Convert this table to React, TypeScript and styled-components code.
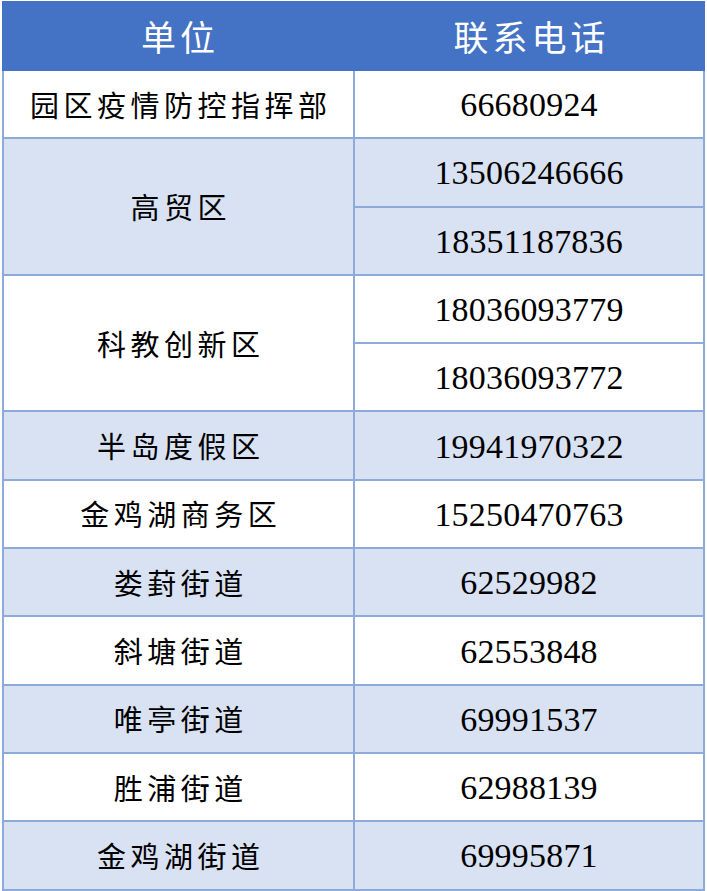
import React from "react";
import styled, { createGlobalStyle } from "styled-components";

const GlobalStyle = createGlobalStyle`
  html, body {
    margin: 0;
    padding: 0;
    background: #ffffff;
  }
  body {
    font-family: "Liberation Serif", "Noto Sans CJK SC", serif;
  }
`;

const Page = styled.div`
  padding: 1px 2px 2px 2px;
  width: 703px;
`;

const Header = styled.div`
  display: grid;
  grid-template-columns: 352px 351px;
  height: 70px;
  background: #4472c4;
`;

const HeadCell = styled.div`
  display: flex;
  align-items: center;
  justify-content: center;
  color: #ffffff;
  font-family: "Noto Sans CJK SC", sans-serif;
  font-size: 35px;
  letter-spacing: 4px;
  padding-left: 4px;
  padding-bottom: 2px;
`;

const Body = styled.div`
  display: grid;
  grid-template-columns: 349px 348px;
  grid-auto-rows: 66.3px;
  gap: 2px;
  padding: 0 2px 2px 2px;
  background: #8eaadb;
`;

const Cell = styled.div<{ $shade: boolean; $span?: number }>`
  display: flex;
  align-items: center;
  justify-content: center;
  background: ${(p) => (p.$shade ? "#d9e2f3" : "#ffffff")};
  grid-row: ${(p) => (p.$span ? `span ${p.$span}` : "auto")};
  color: #000000;
`;

const Unit = styled.span`
  font-family: "Noto Sans CJK SC", sans-serif;
  font-size: 29px;
  letter-spacing: 4.5px;
  padding-left: 4.5px;
  line-height: 1;
`;

const Phone = styled.span`
  font-family: "Liberation Serif", serif;
  font-size: 34px;
  letter-spacing: 0.2px;
  line-height: 1;
  padding-top: 2px;
`;

type Entry = { unit: string; phones: string[] };

const entries: Entry[] = [
  { unit: "园区疫情防控指挥部", phones: ["66680924"] },
  { unit: "高贸区", phones: ["13506246666", "18351187836"] },
  { unit: "科教创新区", phones: ["18036093779", "18036093772"] },
  { unit: "半岛度假区", phones: ["19941970322"] },
  { unit: "金鸡湖商务区", phones: ["15250470763"] },
  { unit: "娄葑街道", phones: ["62529982"] },
  { unit: "斜塘街道", phones: ["62553848"] },
  { unit: "唯亭街道", phones: ["69991537"] },
  { unit: "胜浦街道", phones: ["62988139"] },
  { unit: "金鸡湖街道", phones: ["69995871"] },
];

export default function App() {
  return (
    <>
      <GlobalStyle />
      <Page>
        <Header>
          <HeadCell>单位</HeadCell>
          <HeadCell>联系电话</HeadCell>
        </Header>
        <Body>
          {entries.map((e, i) => {
            const shade = i % 2 === 1;
            return (
              <React.Fragment key={e.unit}>
                <Cell $shade={shade} $span={e.phones.length > 1 ? e.phones.length : undefined}>
                  <Unit>{e.unit}</Unit>
                </Cell>
                {e.phones.map((ph) => (
                  <Cell key={ph} $shade={shade} style={{ gridColumn: 2 }}>
                    <Phone>{ph}</Phone>
                  </Cell>
                ))}
              </React.Fragment>
            );
          })}
        </Body>
      </Page>
    </>
  );
}
